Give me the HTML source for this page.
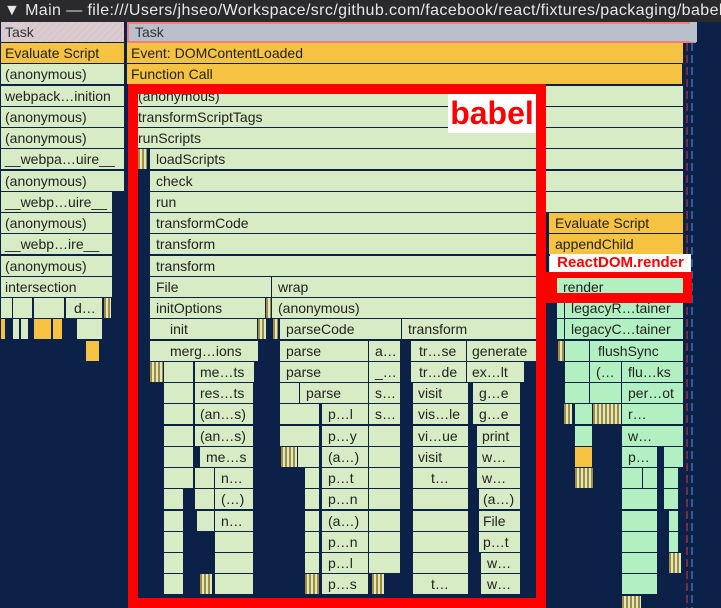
<!DOCTYPE html>
<html><head><meta charset="utf-8"><style>
html{height:608px;overflow:hidden;background:#0b2148}
body{margin:0;width:721px;height:608px;background:#0b2148;position:relative;overflow:hidden;font-family:"Liberation Sans","DejaVu Sans",sans-serif}
#hd{position:absolute;left:0;top:0;width:721px;height:22px;background:#2a2a2c;color:#e8e8e8;font-size:16px;letter-spacing:0.4px;line-height:21px;white-space:nowrap;overflow:hidden;padding-left:4px;box-sizing:border-box}
.b{position:absolute;height:21px;background:#d7ecc4;border-right:1px solid #0b2148;border-bottom:1px solid #0b2148;font-size:14px;color:#222;line-height:21px;padding-left:4px;box-sizing:border-box;white-space:nowrap;overflow:hidden}
.y{background:#f5c242}
.g{background:#b2f0c2}
.s{background:repeating-linear-gradient(90deg,#a88a3c 0 2px,#d7ecc4 2px 4px);padding:0}
.ys{background:#f5c242;padding:0}
.r{position:absolute;background:#f00}
</style></head><body>
<div id="hd">▼ Main — file:///Users/jhseo/Workspace/src/github.com/facebook/react/fixtures/packaging/babel-standalone</div>
<div class="b" style="left:1px;top:22px;width:124px;background:repeating-linear-gradient(135deg,#f2c4c4 0 2px,#c9cdd6 2px 5px);color:#333">Task</div>
<div style="position:absolute;left:127px;top:22px;width:559px;height:17px;background:#b9c0cc;border:2px solid #f08080;font-size:14px;line-height:17px;padding-left:6px;color:#333;box-sizing:content-box">Task</div>
<div style="position:absolute;left:690px;top:22px;width:7px;height:20px;background:#b9c0cc"></div>
<div style="position:absolute;left:686px;top:43px;width:2px;height:565px;background:repeating-linear-gradient(180deg,#7a2b44 0 8px,transparent 8px 12px)"></div>
<div style="position:absolute;left:691px;top:43px;width:2px;height:565px;background:repeating-linear-gradient(180deg,#2b5ea0 0 8px,transparent 8px 12px)"></div>
<div class="b y" style="left:1px;top:43px;width:124px">Evaluate Script</div>
<div class="b y" style="left:127px;top:43px;width:557px">Event: DOMContentLoaded</div>
<div class="b" style="left:1px;top:64px;width:124px">(anonymous)</div>
<div class="b y" style="left:127px;top:64px;width:556px">Function Call</div>
<div class="b" style="left:1px;top:86px;width:124px">webpack…inition</div>
<div class="b" style="left:1px;top:107px;width:124px">(anonymous)</div>
<div class="b" style="left:1px;top:128px;width:124px">(anonymous)</div>
<div class="b" style="left:1px;top:149px;width:124px">__webpa…uire__</div>
<div class="b" style="left:1px;top:171px;width:124px">(anonymous)</div>
<div class="b" style="left:1px;top:192px;width:112px">__webp…uire__</div>
<div class="b" style="left:1px;top:213px;width:112px">(anonymous)</div>
<div class="b" style="left:1px;top:234px;width:112px">__webp…ire__</div>
<div class="b" style="left:1px;top:256px;width:112px">(anonymous)</div>
<div class="b" style="left:1px;top:277px;width:112px">intersection</div>
<div class="b" style="left:1px;top:298px;width:12px;padding:0"></div>
<div class="b" style="left:13px;top:298px;width:20px;padding:0"></div>
<div class="b" style="left:34px;top:298px;width:31px;padding:0"></div>
<div class="b" style="left:66px;top:298px;width:37px;padding-left:8px">d…</div>
<div class="b s" style="left:104px;top:298px;width:8px"></div>
<div class="b ys" style="left:1px;top:319px;width:5px"></div>
<div class="b" style="left:13px;top:319px;width:7px;padding:0"></div>
<div class="b" style="left:21px;top:319px;width:8px;padding:0"></div>
<div class="b ys" style="left:34px;top:319px;width:18px"></div>
<div class="b ys" style="left:53px;top:319px;width:10px"></div>
<div class="b" style="left:77px;top:319px;width:26px;padding:0"></div>
<div class="b ys" style="left:86px;top:341px;width:14px"></div>
<div class="b" style="left:134px;top:86px;width:550px">(anonymous)</div>
<div class="b" style="left:134px;top:107px;width:550px">transformScriptTags</div>
<div class="b" style="left:134px;top:128px;width:550px">runScripts</div>
<div class="b s" style="left:138px;top:149px;width:10px"></div>
<div class="b" style="left:150px;top:149px;width:534px;padding-left:6px">loadScripts</div>
<div class="b" style="left:150px;top:171px;width:534px;padding-left:6px">check</div>
<div class="b" style="left:150px;top:192px;width:534px;padding-left:6px">run</div>
<div class="b" style="left:150px;top:213px;width:396px;padding-left:6px">transformCode</div>
<div class="b" style="left:150px;top:234px;width:396px;padding-left:6px">transform</div>
<div class="b" style="left:150px;top:256px;width:396px;padding-left:6px">transform</div>
<div class="b" style="left:150px;top:277px;width:122px;padding-left:6px">File</div>
<div class="b" style="left:272px;top:277px;width:274px;padding-left:6px">wrap</div>
<div class="b" style="left:150px;top:298px;width:116px;padding-left:6px">initOptions</div>
<div class="b s" style="left:266px;top:298px;width:6px"></div>
<div class="b" style="left:272px;top:298px;width:274px;padding-left:6px">(anonymous)</div>
<div class="b" style="left:150px;top:319px;width:108px;padding-left:20px">init</div>
<div class="b s" style="left:258px;top:319px;width:9px"></div>
<div class="b s" style="left:273px;top:319px;width:6px"></div>
<div class="b" style="left:280px;top:319px;width:122px;padding-left:6px">parseCode</div>
<div class="b" style="left:402px;top:319px;width:144px;padding-left:6px">transform</div>
<div class="b" style="left:150px;top:341px;width:109px;padding-left:20px">merg…ions</div>
<div class="b" style="left:280px;top:341px;width:89px;padding-left:6px">parse</div>
<div class="b" style="left:369px;top:341px;width:32px;padding-left:6px">a…</div>
<div class="b" style="left:411px;top:341px;width:56px;padding-left:8px">tr…se</div>
<div class="b" style="left:467px;top:341px;width:70px;padding-left:5px">generate</div>
<div class="b s" style="left:150px;top:362px;width:14px"></div>
<div class="b" style="left:164px;top:362px;width:30px;padding:0"></div>
<div class="b" style="left:195px;top:362px;width:60px;padding-left:5px">me…ts</div>
<div class="b" style="left:280px;top:362px;width:89px;padding-left:6px">parse</div>
<div class="b" style="left:369px;top:362px;width:32px;padding-left:6px">_…</div>
<div class="b" style="left:411px;top:362px;width:56px;padding-left:8px">tr…de</div>
<div class="b" style="left:467px;top:362px;width:58px;padding-left:5px">ex…lt</div>
<div class="b" style="left:164px;top:383px;width:30px;padding:0"></div>
<div class="b" style="left:195px;top:383px;width:59px;padding-left:5px">res…ts</div>
<div class="b" style="left:280px;top:383px;width:20px;padding:0"></div>
<div class="b" style="left:300px;top:383px;width:69px;padding-left:6px">parse</div>
<div class="b" style="left:369px;top:383px;width:32px;padding-left:6px">s…</div>
<div class="b" style="left:413px;top:383px;width:56px;padding-left:5px">visit</div>
<div class="b" style="left:473px;top:383px;width:48px;padding-left:6px">g…e</div>
<div class="b" style="left:164px;top:404px;width:30px;padding:0"></div>
<div class="b" style="left:195px;top:404px;width:59px;padding-left:5px">(an…s)</div>
<div class="b" style="left:280px;top:404px;width:40px;padding:0"></div>
<div class="b" style="left:322px;top:404px;width:47px;padding-left:6px">p…l</div>
<div class="b" style="left:369px;top:404px;width:32px;padding-left:6px">s…</div>
<div class="b" style="left:413px;top:404px;width:56px;padding-left:5px">vis…le</div>
<div class="b" style="left:473px;top:404px;width:48px;padding-left:6px">g…e</div>
<div class="b" style="left:164px;top:426px;width:30px;padding:0"></div>
<div class="b" style="left:195px;top:426px;width:59px;padding-left:5px">(an…s)</div>
<div class="b" style="left:280px;top:426px;width:40px;padding:0"></div>
<div class="b" style="left:322px;top:426px;width:47px;padding-left:6px">p…y</div>
<div class="b" style="left:369px;top:426px;width:32px;padding:0"></div>
<div class="b" style="left:413px;top:426px;width:56px;padding-left:5px">vi…ue</div>
<div class="b" style="left:477px;top:426px;width:44px;padding-left:5px">print</div>
<div class="b" style="left:164px;top:447px;width:30px;padding:0"></div>
<div class="b" style="left:200px;top:447px;width:54px;padding-left:6px">me…s</div>
<div class="b s" style="left:281px;top:447px;width:17px"></div>
<div class="b" style="left:298px;top:447px;width:22px;padding:0"></div>
<div class="b" style="left:322px;top:447px;width:47px;padding-left:6px">(a…)</div>
<div class="b" style="left:369px;top:447px;width:32px;padding:0"></div>
<div class="b" style="left:413px;top:447px;width:56px;padding-left:5px">visit</div>
<div class="b" style="left:477px;top:447px;width:44px;padding-left:5px">w…</div>
<div class="b" style="left:164px;top:468px;width:30px;padding:0"></div>
<div class="b" style="left:195px;top:468px;width:20px;padding:0"></div>
<div class="b" style="left:215px;top:468px;width:39px;padding-left:6px">n…</div>
<div class="b" style="left:305px;top:468px;width:15px;padding:0"></div>
<div class="b" style="left:322px;top:468px;width:47px;padding-left:6px">p…t</div>
<div class="b" style="left:369px;top:468px;width:32px;padding:0"></div>
<div class="b" style="left:413px;top:468px;width:56px;padding-left:18px">t…</div>
<div class="b" style="left:477px;top:468px;width:44px;padding-left:5px">w…</div>
<div class="b" style="left:164px;top:489px;width:20px;padding:0"></div>
<div class="b" style="left:195px;top:489px;width:20px;padding:0"></div>
<div class="b" style="left:215px;top:489px;width:39px;padding-left:6px">(…)</div>
<div class="b" style="left:305px;top:489px;width:15px;padding:0"></div>
<div class="b" style="left:322px;top:489px;width:47px;padding-left:6px">p…n</div>
<div class="b" style="left:369px;top:489px;width:32px;padding:0"></div>
<div class="b" style="left:413px;top:489px;width:56px;padding:0"></div>
<div class="b" style="left:479px;top:489px;width:42px;padding-left:4px">(a…)</div>
<div class="b" style="left:164px;top:511px;width:20px;padding:0"></div>
<div class="b" style="left:197px;top:511px;width:18px;padding:0"></div>
<div class="b" style="left:215px;top:511px;width:39px;padding-left:6px">n…</div>
<div class="b" style="left:305px;top:511px;width:15px;padding:0"></div>
<div class="b" style="left:322px;top:511px;width:47px;padding-left:6px">(a…)</div>
<div class="b" style="left:369px;top:511px;width:32px;padding:0"></div>
<div class="b" style="left:413px;top:511px;width:56px;padding:0"></div>
<div class="b" style="left:479px;top:511px;width:42px;padding-left:4px">File</div>
<div class="b" style="left:164px;top:532px;width:20px;padding:0"></div>
<div class="b" style="left:215px;top:532px;width:39px;padding:0"></div>
<div class="b" style="left:305px;top:532px;width:15px;padding:0"></div>
<div class="b" style="left:322px;top:532px;width:47px;padding-left:6px">p…n</div>
<div class="b" style="left:369px;top:532px;width:32px;padding:0"></div>
<div class="b" style="left:413px;top:532px;width:56px;padding:0"></div>
<div class="b" style="left:479px;top:532px;width:42px;padding-left:4px">p…t</div>
<div class="b" style="left:164px;top:553px;width:20px;padding:0"></div>
<div class="b" style="left:215px;top:553px;width:39px;padding:0"></div>
<div class="b" style="left:305px;top:553px;width:15px;padding:0"></div>
<div class="b" style="left:322px;top:553px;width:47px;padding-left:6px">p…l</div>
<div class="b" style="left:369px;top:553px;width:32px;padding:0"></div>
<div class="b" style="left:413px;top:553px;width:56px;padding:0"></div>
<div class="b" style="left:481px;top:553px;width:40px;padding-left:6px">w…</div>
<div class="b" style="left:164px;top:574px;width:20px;padding:0"></div>
<div class="b s" style="left:200px;top:574px;width:13px"></div>
<div class="b" style="left:215px;top:574px;width:39px;padding:0"></div>
<div class="b s" style="left:305px;top:574px;width:15px"></div>
<div class="b" style="left:322px;top:574px;width:47px;padding-left:6px">p…s</div>
<div class="b s" style="left:372px;top:574px;width:13px"></div>
<div class="b" style="left:413px;top:574px;width:56px;padding-left:18px">t…</div>
<div class="b" style="left:481px;top:574px;width:40px;padding-left:6px">w…</div>
<div class="b y" style="left:549px;top:213px;width:135px;padding-left:6px">Evaluate Script</div>
<div class="b y" style="left:549px;top:234px;width:135px;padding-left:6px">appendChild</div>
<div class="b g" style="left:549px;top:256px;width:135px"></div>
<div class="b g" style="left:557px;top:277px;width:127px;padding-left:6px">render</div>
<div class="b g" style="left:557px;top:298px;width:8px;padding:0"></div>
<div class="b g" style="left:565px;top:298px;width:119px;padding-left:6px">legacyR…tainer</div>
<div class="b g" style="left:557px;top:319px;width:8px;padding:0"></div>
<div class="b g" style="left:565px;top:319px;width:119px;padding-left:6px">legacyC…tainer</div>
<div class="b s" style="left:558px;top:341px;width:7px"></div>
<div class="b g" style="left:565px;top:341px;width:25px;padding:0"></div>
<div class="b g" style="left:590px;top:341px;width:94px;padding-left:8px">flushSync</div>
<div class="b g" style="left:565px;top:362px;width:25px;padding:0"></div>
<div class="b g" style="left:590px;top:362px;width:32px;padding-left:6px">(…</div>
<div class="b g" style="left:622px;top:362px;width:62px;padding-left:6px">flu…ks</div>
<div class="b g" style="left:565px;top:383px;width:25px;padding:0"></div>
<div class="b g" style="left:590px;top:383px;width:32px;padding:0"></div>
<div class="b g" style="left:622px;top:383px;width:62px;padding-left:6px">per…ot</div>
<div class="b s" style="left:564px;top:404px;width:9px"></div>
<div class="b g" style="left:575px;top:404px;width:18px;padding:0"></div>
<div class="b s" style="left:593px;top:404px;width:29px"></div>
<div class="b g" style="left:622px;top:404px;width:62px;padding-left:6px">r…</div>
<div class="b g" style="left:575px;top:426px;width:18px;padding:0"></div>
<div class="b g" style="left:622px;top:426px;width:62px;padding-left:6px">w…</div>
<div class="b ys" style="left:575px;top:447px;width:18px"></div>
<div class="b g" style="left:622px;top:447px;width:36px;padding-left:6px">p…</div>
<div class="b g" style="left:664px;top:447px;width:20px;padding:0"></div>
<div class="b s" style="left:575px;top:468px;width:19px"></div>
<div class="b g" style="left:622px;top:468px;width:21px;padding:0"></div>
<div class="b g" style="left:643px;top:468px;width:15px;padding:0"></div>
<div class="b g" style="left:664px;top:468px;width:15px;padding:0"></div>
<div class="b g" style="left:622px;top:489px;width:36px;padding:0"></div>
<div class="b g" style="left:664px;top:489px;width:15px;padding:0"></div>
<div class="b g" style="left:622px;top:511px;width:36px;padding:0"></div>
<div class="b g" style="left:669px;top:511px;width:10px;padding:0"></div>
<div class="b g" style="left:622px;top:532px;width:36px;padding:0"></div>
<div class="b g" style="left:669px;top:532px;width:10px;padding:0"></div>
<div class="b g" style="left:622px;top:553px;width:36px;padding:0"></div>
<div class="b s" style="left:669px;top:553px;width:13px"></div>
<div class="b g" style="left:622px;top:574px;width:36px;padding:0"></div>
<div class="b s" style="left:622px;top:596px;width:20px"></div>
<div class="r" style="left:128px;top:84px;width:418px;height:10px"></div>
<div class="r" style="left:128px;top:84px;width:10px;height:524px"></div>
<div class="r" style="left:536px;top:84px;width:10px;height:524px"></div>
<div class="r" style="left:128px;top:598px;width:418px;height:10px"></div>
<div style="position:absolute;left:448px;top:94px;width:88px;height:39px;background:#fff;color:#f00;font-weight:bold;font-size:32px;line-height:39px;text-align:center">babel</div>
<div style="position:absolute;left:550px;top:254px;width:141px;height:18px;background:#fff;color:#f00;font-weight:bold;font-size:15px;line-height:18px;text-align:center">ReactDOM.render</div>
<div class="r" style="left:546px;top:272px;width:146px;height:6px"></div>
<div class="r" style="left:683px;top:272px;width:9px;height:31px"></div>
<div class="r" style="left:546px;top:293px;width:146px;height:10px"></div>
<div class="r" style="left:546px;top:272px;width:11px;height:31px"></div>
</body></html>
